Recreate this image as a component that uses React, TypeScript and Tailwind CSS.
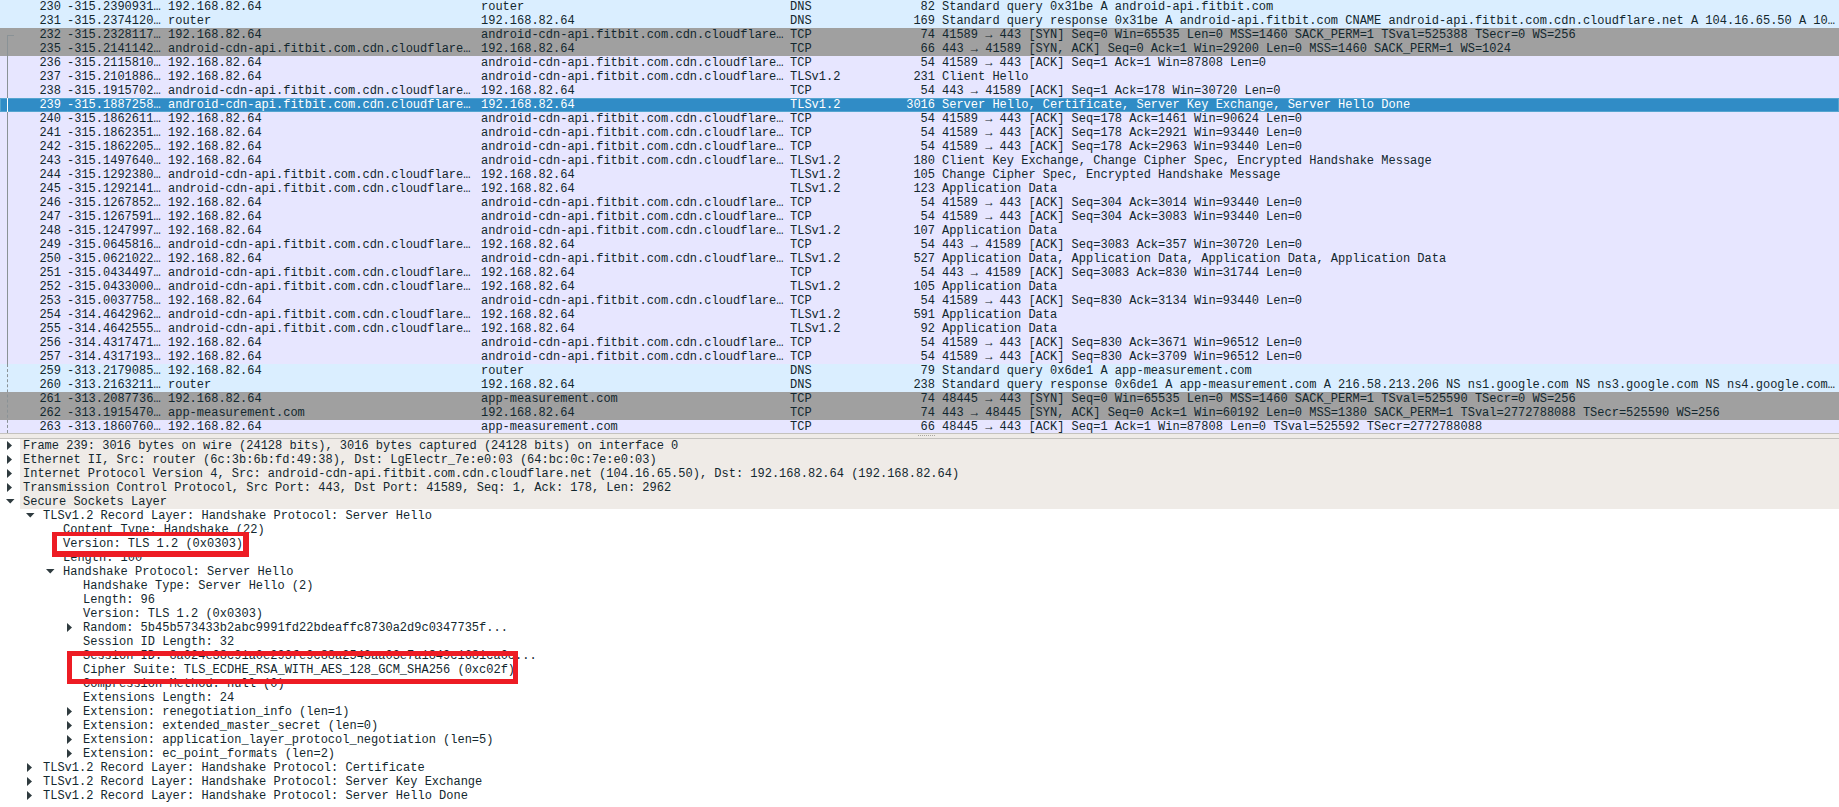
const TCP_C="android-cdn-api.fitbit.com.cdn.cloudflare…";
const IP="192.168.82.64";
type R=[string,string,string,string,string,string,string,string];
const D="d",G="g",L="l",S="s";
const rows:R[]=[
[D,"230","-315.2390931…",IP,"router","DNS","82","Standard query 0x31be A android-api.fitbit.com"],
[D,"231","-315.2374120…","router",IP,"DNS","169","Standard query response 0x31be A android-api.fitbit.com CNAME android-api.fitbit.com.cdn.cloudflare.net A 104.16.65.50 A 10…"],
[G,"232","-315.2328117…",IP,TCP_C,"TCP","74","41589 → 443 [SYN] Seq=0 Win=65535 Len=0 MSS=1460 SACK_PERM=1 TSval=525388 TSecr=0 WS=256"],
[G,"235","-315.2141142…",TCP_C,IP,"TCP","66","443 → 41589 [SYN, ACK] Seq=0 Ack=1 Win=29200 Len=0 MSS=1460 SACK_PERM=1 WS=1024"],
[L,"236","-315.2115810…",IP,TCP_C,"TCP","54","41589 → 443 [ACK] Seq=1 Ack=1 Win=87808 Len=0"],
[L,"237","-315.2101886…",IP,TCP_C,"TLSv1.2","231","Client Hello"],
[L,"238","-315.1915702…",TCP_C,IP,"TCP","54","443 → 41589 [ACK] Seq=1 Ack=178 Win=30720 Len=0"],
[S,"239","-315.1887258…",TCP_C,IP,"TLSv1.2","3016","Server Hello, Certificate, Server Key Exchange, Server Hello Done"],
[L,"240","-315.1862611…",IP,TCP_C,"TCP","54","41589 → 443 [ACK] Seq=178 Ack=1461 Win=90624 Len=0"],
[L,"241","-315.1862351…",IP,TCP_C,"TCP","54","41589 → 443 [ACK] Seq=178 Ack=2921 Win=93440 Len=0"],
[L,"242","-315.1862205…",IP,TCP_C,"TCP","54","41589 → 443 [ACK] Seq=178 Ack=2963 Win=93440 Len=0"],
[L,"243","-315.1497640…",IP,TCP_C,"TLSv1.2","180","Client Key Exchange, Change Cipher Spec, Encrypted Handshake Message"],
[L,"244","-315.1292380…",TCP_C,IP,"TLSv1.2","105","Change Cipher Spec, Encrypted Handshake Message"],
[L,"245","-315.1292141…",TCP_C,IP,"TLSv1.2","123","Application Data"],
[L,"246","-315.1267852…",IP,TCP_C,"TCP","54","41589 → 443 [ACK] Seq=304 Ack=3014 Win=93440 Len=0"],
[L,"247","-315.1267591…",IP,TCP_C,"TCP","54","41589 → 443 [ACK] Seq=304 Ack=3083 Win=93440 Len=0"],
[L,"248","-315.1247997…",IP,TCP_C,"TLSv1.2","107","Application Data"],
[L,"249","-315.0645816…",TCP_C,IP,"TCP","54","443 → 41589 [ACK] Seq=3083 Ack=357 Win=30720 Len=0"],
[L,"250","-315.0621022…",IP,TCP_C,"TLSv1.2","527","Application Data, Application Data, Application Data, Application Data"],
[L,"251","-315.0434497…",TCP_C,IP,"TCP","54","443 → 41589 [ACK] Seq=3083 Ack=830 Win=31744 Len=0"],
[L,"252","-315.0433000…",TCP_C,IP,"TLSv1.2","105","Application Data"],
[L,"253","-315.0037758…",IP,TCP_C,"TCP","54","41589 → 443 [ACK] Seq=830 Ack=3134 Win=93440 Len=0"],
[L,"254","-314.4642962…",TCP_C,IP,"TLSv1.2","591","Application Data"],
[L,"255","-314.4642555…",TCP_C,IP,"TLSv1.2","92","Application Data"],
[L,"256","-314.4317471…",IP,TCP_C,"TCP","54","41589 → 443 [ACK] Seq=830 Ack=3671 Win=96512 Len=0"],
[L,"257","-314.4317193…",IP,TCP_C,"TCP","54","41589 → 443 [ACK] Seq=830 Ack=3709 Win=96512 Len=0"],
[D,"259","-313.2179085…",IP,"router","DNS","79","Standard query 0x6de1 A app-measurement.com"],
[D,"260","-313.2163211…","router",IP,"DNS","238","Standard query response 0x6de1 A app-measurement.com A 216.58.213.206 NS ns1.google.com NS ns3.google.com NS ns4.google.com…"],
[G,"261","-313.2087736…",IP,"app-measurement.com","TCP","74","48445 → 443 [SYN] Seq=0 Win=65535 Len=0 MSS=1460 SACK_PERM=1 TSval=525590 TSecr=0 WS=256"],
[G,"262","-313.1915470…","app-measurement.com",IP,"TCP","74","443 → 48445 [SYN, ACK] Seq=0 Ack=1 Win=60192 Len=0 MSS=1380 SACK_PERM=1 TSval=2772788088 TSecr=525590 WS=256"],
[L,"263","-313.1860760…",IP,"app-measurement.com","TCP","66","48445 → 443 [ACK] Seq=1 Ack=1 Win=87808 Len=0 TSval=525592 TSecr=2772788088"],
];
const bg:Record<string,string>={d:"bg-[#daeeff] text-[#12272e]",g:"bg-[#a0a0a0] text-[#12272e]",l:"bg-[#e7e6ff] text-[#12272e]",s:"bg-[#308cc6] text-white"};
type T=[number,string,("c"|"o"|"")?,boolean?];
const tree:T[]=[
[0,"Frame 239: 3016 bytes on wire (24128 bits), 3016 bytes captured (24128 bits) on interface 0","c",true],
[0,"Ethernet II, Src: router (6c:3b:6b:fd:49:38), Dst: LgElectr_7e:e0:03 (64:bc:0c:7e:e0:03)","c",true],
[0,"Internet Protocol Version 4, Src: android-cdn-api.fitbit.com.cdn.cloudflare.net (104.16.65.50), Dst: 192.168.82.64 (192.168.82.64)","c",true],
[0,"Transmission Control Protocol, Src Port: 443, Dst Port: 41589, Seq: 1, Ack: 178, Len: 2962","c",true],
[0,"Secure Sockets Layer","o",true],
[1,"TLSv1.2 Record Layer: Handshake Protocol: Server Hello","o"],
[2,"Content Type: Handshake (22)"],
[2,"Version: TLS 1.2 (0x0303)"],
[2,"Length: 100"],
[2,"Handshake Protocol: Server Hello","o"],
[3,"Handshake Type: Server Hello (2)"],
[3,"Length: 96"],
[3,"Version: TLS 1.2 (0x0303)"],
[3,"Random: 5b45b573433b2abc9991fd22bdeaffc8730a2d9c0347735f...","c"],
[3,"Session ID Length: 32"],
[3,"Session ID: 8a024e38c91a0e293fe9c88a2543aa03e7a1849c1681ca0c..."],
[3,"Cipher Suite: TLS_ECDHE_RSA_WITH_AES_128_GCM_SHA256 (0xc02f)"],
[3,"Compression Method: null (0)"],
[3,"Extensions Length: 24"],
[3,"Extension: renegotiation_info (len=1)","c"],
[3,"Extension: extended_master_secret (len=0)","c"],
[3,"Extension: application_layer_protocol_negotiation (len=5)","c"],
[3,"Extension: ec_point_formats (len=2)","c"],
[1,"TLSv1.2 Record Layer: Handshake Protocol: Certificate","c"],
[1,"TLSv1.2 Record Layer: Handshake Protocol: Server Key Exchange","c"],
[1,"TLSv1.2 Record Layer: Handshake Protocol: Server Hello Done","c"],
];
const pad=["w-[20px]","w-[40px]","w-[60px]","w-[80px]"];
function Arrow({o}:{o:boolean}){return <svg width="9" height="9" viewBox="0 0 9 9" className="absolute right-[5px] top-[2px]">{o?<polygon points="0,2 8.5,2 4.25,6.5" fill="#2f3b3f"/>:<polygon points="1,0 6,4.5 1,9" fill="#2f3b3f"/>}</svg>;}
export default function App(){return(
<div className="relative w-[1839px] h-[807px] overflow-hidden bg-white font-['Liberation_Mono',monospace] text-[12px] leading-[14px] tracking-normal">
<div className="relative h-[433px] overflow-hidden">
{rows.map(r=>(
<div key={r[1]} className={`flex h-[14px] whitespace-pre ${bg[r[0]]} ${r[0]==="s"?"outline outline-1 -outline-offset-1 outline-[#55a5cf]":""}`}>
<div className="w-[61px] text-right shrink-0">{r[1]}</div>
<div className="w-[6px] shrink-0"/>
<div className="w-[101px] shrink-0">{r[2]}</div>
<div className="w-[313px] shrink-0 overflow-hidden">{r[3]}</div>
<div className="w-[309px] shrink-0 overflow-hidden">{r[4]}</div>
<div className="w-[80px] shrink-0">{r[5]}</div>
<div className="w-[65px] text-right shrink-0">{r[6]}</div>
<div className="w-[7px] shrink-0"/>
<div className="flex-1 min-w-0">{r[7]}</div>
</div>))}
<div className="absolute left-[7px] top-[35px] h-[63px] border-l border-[#8a9296]"/>
<div className="absolute left-[7px] top-[35px] w-[7px] border-t border-[#8a9296]"/>
<div className="absolute left-[7px] top-[98px] h-[14px] border-l border-white"/>
<div className="absolute left-[7px] top-[112px] h-[252px] border-l border-[#8a9296]"/>
<div className="absolute left-[7px] top-[364px] h-[69px] border-l border-dashed border-[#8a9296]"/>
</div>
<div className="relative h-[6px] border-y border-[#c4c2be] bg-[#efebe7]">
<div className="absolute left-[918px] top-[1px] w-[17px] border-t border-dotted border-[#a8a6a2]"/>
</div>
<div>
{tree.map((t,i)=>(
<div key={i} className="flex h-[14px] whitespace-pre text-[#12272e]">
<div className={`relative shrink-0 ${pad[t[0]]}`}>{t[2]?<Arrow o={t[2]==="o"}/>:null}</div>
<div className={`flex-1 pl-[3px] ${t[3]?"bg-[#efebe7]":""}`}>{t[1]}</div>
</div>))}
</div>
<div className="absolute left-[52px] top-[532px] w-[197px] h-[25px] border-solid border-t-[4px] border-b-[6px] border-l-[5px] border-r-[6px] border-[#ed1c24]"/>
<div className="absolute left-[67px] top-[651px] w-[451px] h-[33px] border-[5px] border-[#ed1c24]"/>
</div>);}
